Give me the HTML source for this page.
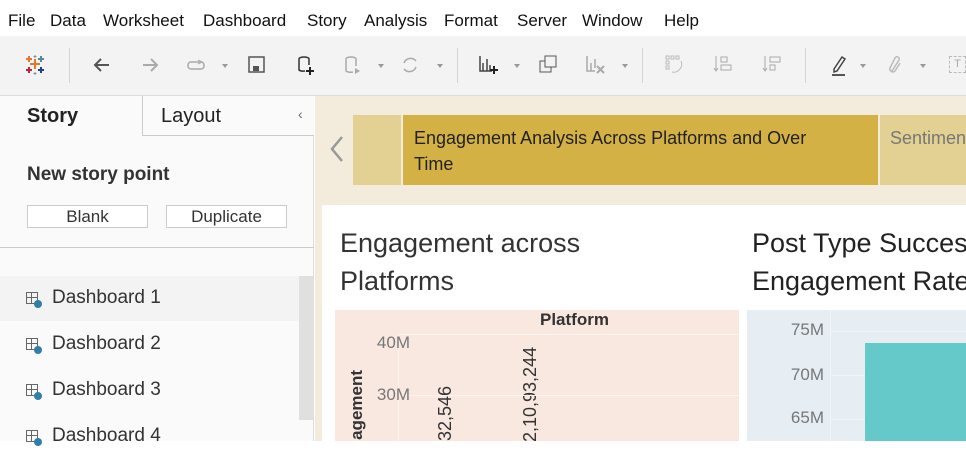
<!DOCTYPE html>
<html><head><style>
*{margin:0;padding:0;box-sizing:border-box}
body{width:966px;height:441px;overflow:hidden;background:#fff;font-family:"Liberation Sans",sans-serif;position:relative}
.a{position:absolute}
.menu span{position:absolute;top:11px;font-size:17px;color:#111}
.tb{left:0;top:36px;width:966px;height:60px;background:#f3f3f3;border-bottom:1px solid #ddd}
.sep{position:absolute;top:48px;width:1px;height:35px;background:#d3d3d3}
.ic{position:absolute;top:55px}
.dd{position:absolute;top:64px;width:0;height:0;border-left:3px solid transparent;border-right:3px solid transparent;border-top:4px solid #999}
.row{position:absolute;left:0;width:299px;height:45px;font-size:19px;color:#333}
.row span{position:absolute;left:52px;top:11px}
.gi{position:absolute;left:26px;top:16px;width:12px;height:12px;border:1px solid #666}
.gi:before{content:"";position:absolute;left:4px;top:0;width:1px;height:10px;background:#666}
.gi:after{content:"";position:absolute;left:0;top:4px;width:10px;height:1px;background:#666}
.ck{position:absolute;left:34px;top:24px;width:8px;height:8px;border-radius:50%;background:#2f7fa6}
.ax{font-size:17px;color:#777;text-align:right}
.rot{position:absolute;transform:rotate(-90deg);transform-origin:0 0;white-space:nowrap}
</style></head><body>
<div class="menu">
<span style="left:8px">File</span><span style="left:50px">Data</span><span style="left:103px">Worksheet</span><span style="left:203px">Dashboard</span><span style="left:307px">Story</span><span style="left:364px">Analysis</span><span style="left:444px">Format</span><span style="left:517px">Server</span><span style="left:582px">Window</span><span style="left:664px">Help</span>
</div>
<div class="a tb"></div>
<div class="sep" style="left:69px"></div><div class="sep" style="left:457px"></div><div class="sep" style="left:642px"></div><div class="sep" style="left:805px"></div>
<svg class="a" style="left:24px;top:54px" width="22" height="22" viewBox="0 0 22 22" stroke-width="2"><path d="M11 5v10M6 10h10" stroke="#e8762d"/><path d="M5 2v6M2 5h6" stroke="#e8762d"/><path d="M17 2v6M14 5h6" stroke="#5b879b"/><path d="M5 13v6M2 16h6" stroke="#c72037"/><path d="M17 13v6M14 16h6" stroke="#1f457e"/><path d="M11 1v3M9.5 2.5h3M11 18v3M9.5 19.5h3" stroke="#7099a6" stroke-width="1"/></svg>
<svg class="ic" style="left:92px" width="20" height="20"><path d="M17 10H3M9 4L3 10l6 6" stroke="#555" stroke-width="2" fill="none"/></svg>
<svg class="ic" style="left:140px" width="20" height="20"><path d="M3 10h14M11 4l6 6-6 6" stroke="#aaa" stroke-width="2" fill="none"/></svg>
<svg class="ic" style="left:186px" width="22" height="20"><rect x="2" y="7" width="16" height="7" rx="3" stroke="#aaa" fill="none" stroke-width="1.5"/><path d="M12 5l4 2-4 2" stroke="#aaa" fill="none"/></svg>
<div class="dd" style="left:222px"></div>
<svg class="ic" style="left:248px" width="18" height="18"><rect x="1" y="2" width="15" height="15" stroke="#555" fill="none" stroke-width="1.5"/><rect x="5" y="11" width="6" height="5" fill="#555"/></svg>
<svg class="ic" style="left:296px" width="20" height="22"><path d="M3 4v11a5 2 0 0 0 6 1M3 4a5 2 0 0 1 10 0v6" stroke="#333" fill="none" stroke-width="1.5"/><path d="M14 12v8M10 16h8" stroke="#222" stroke-width="2"/></svg>
<svg class="ic" style="left:343px" width="20" height="22"><path d="M3 4v12a5 2 0 0 0 7 1M3 4a5 2 0 0 1 10 0v7" stroke="#aaa" fill="none" stroke-width="1.5"/><path d="M12 13l5 3-5 3z" fill="#aaa"/></svg>
<div class="dd" style="left:378px"></div>
<svg class="ic" style="left:400px" width="20" height="20"><path d="M4 8a7 7 0 0 1 12-2M16 12a7 7 0 0 1-12 2" stroke="#aaa" fill="none" stroke-width="1.5"/></svg>
<div class="dd" style="left:437px"></div>
<svg class="ic" style="left:479px" width="20" height="20"><path d="M1 1v15h12M4 16V8M8 16V4M11 16V10" stroke="#444" stroke-width="1.5" fill="none"/><path d="M15 11v8M11 15h8" stroke="#222" stroke-width="2"/></svg>
<div class="dd" style="left:514px"></div>
<svg class="ic" style="left:539px" width="20" height="20"><rect x="1" y="6" width="11" height="11" stroke="#555" fill="none"/><rect x="6" y="1" width="11" height="11" stroke="#555" fill="#f3f3f3"/></svg>
<svg class="ic" style="left:586px" width="20" height="20"><path d="M1 1v15h8M5 16V8M9 13V4" stroke="#aaa" stroke-width="1.5" fill="none"/><path d="M11 11l7 7M18 11l-7 7" stroke="#aaa" stroke-width="2"/></svg>
<div class="dd" style="left:622px"></div>
<svg class="ic" style="left:665px" width="20" height="20" stroke="#bbb" fill="none"><rect x="1" y="1" width="3" height="3"/><rect x="6" y="1" width="3" height="3"/><rect x="11" y="1" width="3" height="3"/><rect x="1" y="6" width="3" height="3"/><rect x="1" y="11" width="3" height="3"/><path d="M16 6a8 8 0 0 1-9 11"/></svg>
<svg class="ic" style="left:713px" width="20" height="20" stroke="#aaa" fill="none"><path d="M3 1v15M1 13l2 3 2-3"/><rect x="8" y="2" width="6" height="5"/><rect x="8" y="10" width="10" height="5"/></svg>
<svg class="ic" style="left:762px" width="20" height="20" stroke="#aaa" fill="none"><path d="M3 1v15M1 13l2 3 2-3"/><rect x="8" y="2" width="10" height="5"/><rect x="8" y="10" width="5" height="5"/></svg>
<svg class="ic" style="left:830px" width="18" height="22"><path d="M4 14l8-12 3 2-8 12-3 1z" stroke="#444" fill="none" stroke-width="1.5"/><rect x="2" y="19" width="13" height="2" fill="#555"/></svg>
<div class="dd" style="left:860px"></div>
<svg class="ic" style="left:887px" width="16" height="20"><path d="M5 16l7-11a2 2 0 0 0-4-2L3 13a3 3 0 0 0 5 3l5-8" stroke="#bbb" fill="none" stroke-width="1.5"/></svg>
<div class="dd" style="left:920px"></div>
<div class="a" style="left:949px;top:56px;width:17px;height:17px;border:1px dashed #bbb;font-size:11px;color:#aaa;text-align:center;line-height:15px">T</div>

<div class="a" style="left:0;top:96px;width:314px;height:345px;background:#fafafa;border-right:1px solid #ddd"></div>
<div class="a" style="left:142px;top:96px;width:172px;height:40px;border-left:1px solid #ccc;border-bottom:1px solid #ccc;background:#fafafa"></div>
<div class="a" style="left:27px;top:105px;font-size:20px;font-weight:bold;color:#222">Story</div>
<div class="a" style="left:161px;top:105px;font-size:20px;color:#222">Layout</div>
<div class="a" style="left:298px;top:106px;font-size:14px;color:#666">‹</div>
<div class="a" style="left:27px;top:164px;font-size:19px;font-weight:bold;color:#333">New story point</div>
<div class="a" style="left:27px;top:205px;width:121px;height:23px;border:1px solid #ccc;background:#fff;font-size:17px;color:#333;text-align:center;line-height:21px">Blank</div>
<div class="a" style="left:166px;top:205px;width:121px;height:23px;border:1px solid #ccc;background:#fff;font-size:17px;color:#333;text-align:center;line-height:21px">Duplicate</div>
<div class="a" style="left:0;top:247px;width:314px;height:1px;background:#ccc"></div>
<div class="a" style="left:299px;top:276px;width:15px;height:144px;background:#e0e0e0"></div>
<div class="row" style="top:276px;background:#f3f3f3"><i class="gi"></i><i class="ck"></i><span>Dashboard 1</span></div>
<div class="row" style="top:322px"><i class="gi"></i><i class="ck"></i><span>Dashboard 2</span></div>
<div class="row" style="top:368px"><i class="gi"></i><i class="ck"></i><span>Dashboard 3</span></div>
<div class="row" style="top:414px"><i class="gi"></i><i class="ck"></i><span>Dashboard 4</span></div>

<div class="a" style="left:315px;top:96px;width:651px;height:345px;background:#f3ecdc"></div>
<svg class="a" style="left:326px;top:135px" width="20" height="28"><path d="M16 2L6 14l10 12" stroke="#999" stroke-width="2.5" fill="none"/></svg>
<div class="a" style="left:353px;top:115px;width:48px;height:70px;background:#e3d193"></div>
<div class="a" style="left:403px;top:115px;width:475px;height:70px;background:#d3b144;font-size:18px;color:#222;padding:10px 0 0 11px;line-height:26px">Engagement Analysis Across Platforms and Over<br>Time</div>
<div class="a" style="left:880px;top:115px;width:86px;height:70px;background:#e3d193;font-size:18px;color:#777;padding:10px 0 0 10px;line-height:26px;overflow:hidden;white-space:nowrap">Sentiment</div>
<div class="a" style="left:322px;top:205px;width:644px;height:236px;background:#fff"></div>
<div class="a" style="left:340px;top:224px;font-size:27px;color:#333;line-height:38px">Engagement across<br>Platforms</div>
<div class="a" style="left:752px;top:224px;font-size:27px;color:#222;line-height:38px;white-space:nowrap">Post Type Success<br>Engagement Rate</div>
<div class="a" style="left:335px;top:310px;width:404px;height:131px;background:#f9e8e0;overflow:hidden">
 <div class="rot" style="left:12px;top:162px;font-size:17px;font-weight:bold;color:#333">Engagement</div>
 <div class="rot" style="left:100px;top:146px;font-size:18px;color:#333">1,32,546</div>
 <div class="rot" style="left:185px;top:132px;font-size:18px;color:#333">2,10,93,244</div>
</div>
<div class="a" style="left:540px;top:310px;font-size:17px;font-weight:bold;color:#333">Platform</div>
<div class="a" style="left:398px;top:334px;width:341px;height:1px;background:#fbf3ef"></div>
<div class="a" style="left:398px;top:395px;width:341px;height:1px;background:#fbf3ef"></div>
<div class="a" style="left:398px;top:334px;width:1px;height:107px;background:#fbf3ef"></div>
<div class="a ax" style="left:350px;top:333px;width:60px">40M</div>
<div class="a ax" style="left:350px;top:385px;width:60px">30M</div>
<div class="a" style="left:747px;top:310px;width:219px;height:131px;background:#e6eef4"></div>
<div class="a" style="left:830px;top:310px;width:1px;height:131px;background:#f0f5f8"></div>
<div class="a" style="left:830px;top:331px;width:136px;height:1px;background:#f0f5f8"></div>
<div class="a" style="left:830px;top:375px;width:136px;height:1px;background:#f0f5f8"></div>
<div class="a" style="left:830px;top:419px;width:136px;height:1px;background:#f0f5f8"></div>
<div class="a ax" style="left:760px;top:320px;width:64px">75M</div>
<div class="a ax" style="left:760px;top:365px;width:64px">70M</div>
<div class="a ax" style="left:760px;top:408px;width:64px">65M</div>
<div class="a" style="left:865px;top:343px;width:101px;height:98px;background:#64c9c8"></div>
</body></html>
